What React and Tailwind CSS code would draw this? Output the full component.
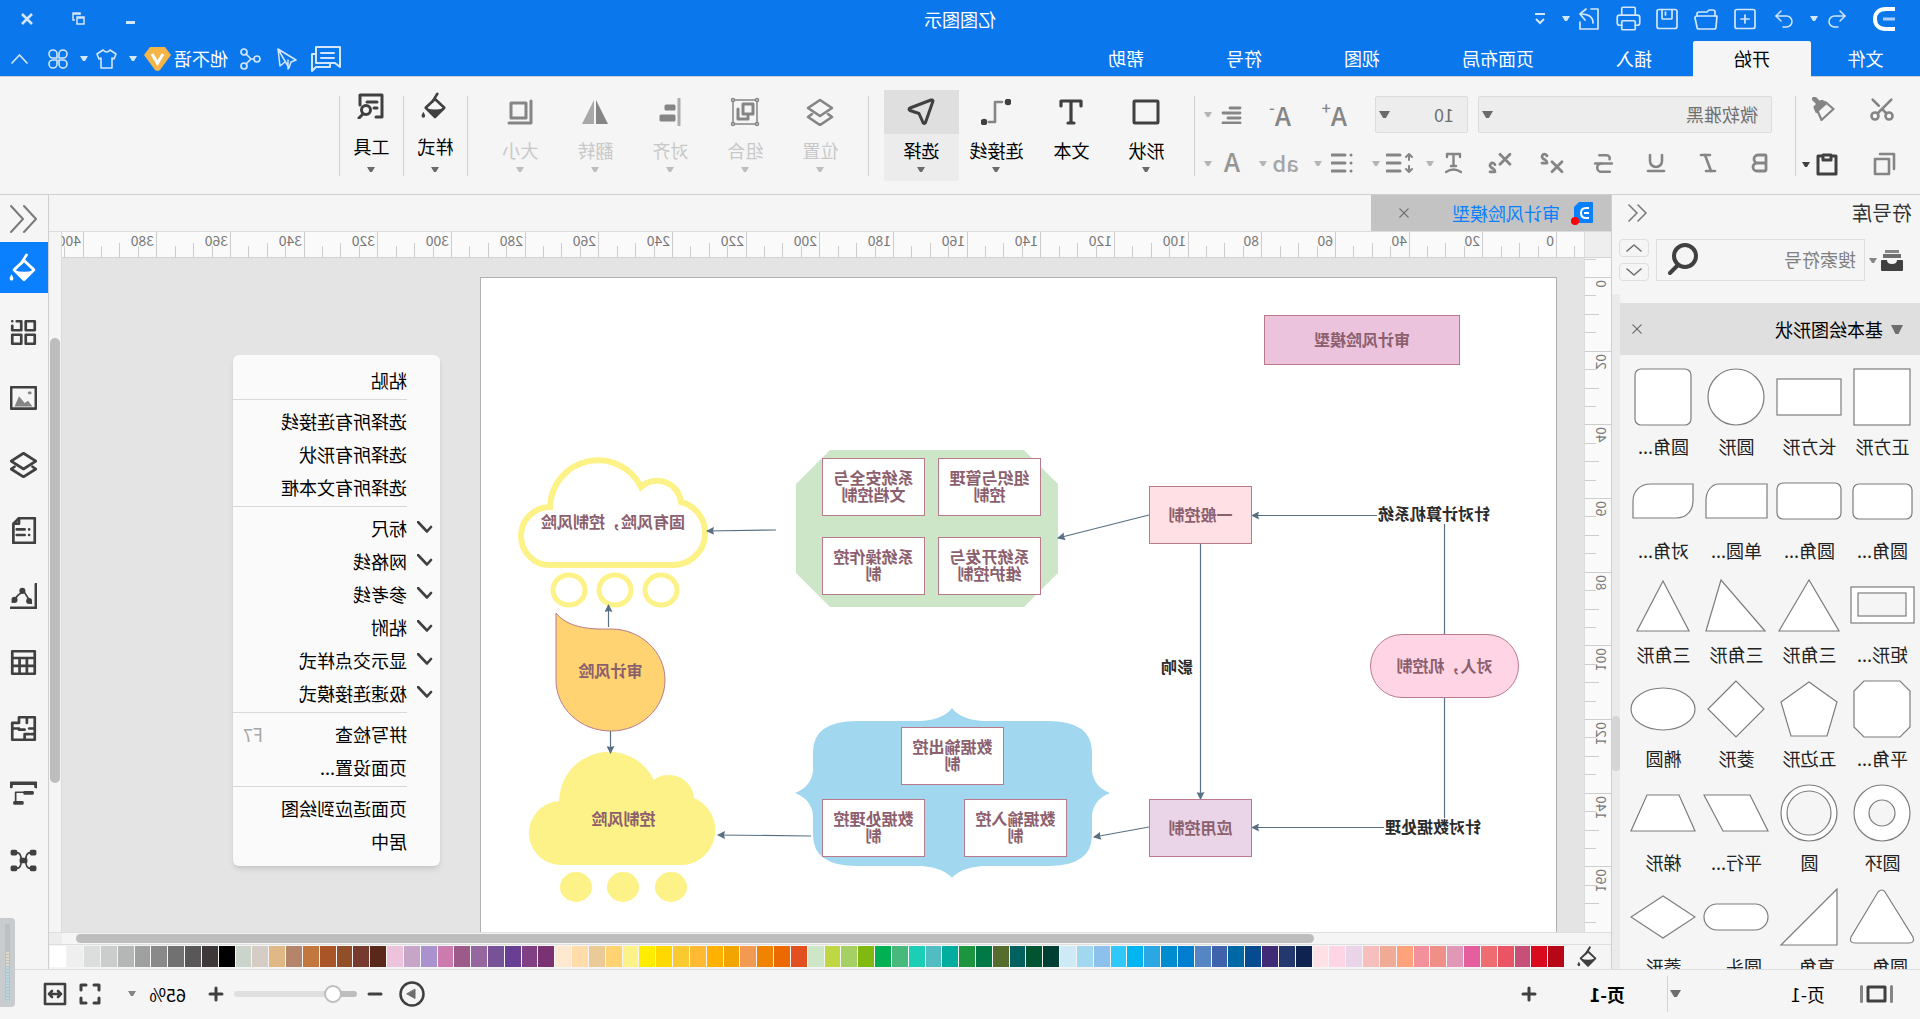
import { useState } from "react";
import {
  Bold,
  Italic,
  Printer,
  Redo2,
  Scissors,
  Strikethrough,
  Subscript,
  Superscript,
  Underline,
  Undo2,
} from "lucide-react";

const MENUS = ["文件", "开始", "插入", "页面布局", "视图", "符号", "帮助"];

const PALETTE = [
  "#b70717", "#d90a1e", "#c75079", "#ea5465", "#ed6d71", "#e55f9e", "#e198b7", "#ef8f88", "#f2919c", "#ffa17b",
  "#f0ab96", "#f6bebc", "#ead5e8", "#ffd5e5", "#ffe0e4", "#0f2350", "#23386f", "#402b77", "#064a8f", "#0068a5",
  "#3f62ad", "#5585c3", "#007fd0", "#008dd0", "#2ba7e3", "#00b5f0", "#30c8fa", "#8bc1ec", "#a1d8f0", "#cdeaf6",
  "#003f33", "#005530", "#00615f", "#566c2f", "#007947", "#1d953f", "#00ad9e", "#51bdc2", "#1cceb5", "#47b97d",
  "#00b053", "#80b910", "#a5d063", "#bfd743", "#cde6c7", "#e2501f", "#ec6800", "#f08300", "#f29a52", "#f2a500",
  "#ffb000", "#ffb933", "#f9c931", "#ffd800", "#ffec00", "#fdf287", "#ffd371", "#eacb97", "#ffdcaa", "#fde9d0",
  "#7b3272", "#814084", "#693f94", "#765296", "#96679f", "#9c5a8a", "#cb7bae", "#a992ce", "#c7a5c9", "#ecc3da",
  "#5a281a", "#763a2e", "#924d29", "#a95527", "#c1773e", "#b4856b", "#dfb885", "#d5ccc6", "#cbd4cb", "#000000",
  "#3e3838", "#595757", "#717171", "#898989", "#9fa0a0", "#b5b6b6", "#cbcdcc", "#dcdddd", "#efefef", "#ffffff",
];

const SHAPES = [
  { name: "正方形", draw: <rect x="5" y="2" width="56" height="56" /> },
  { name: "长方形", draw: <rect x="1" y="12" width="64" height="36" /> },
  { name: "圆形", draw: <circle cx="33" cy="30" r="28" /> },
  { name: "圆角...", draw: <rect x="5" y="2" width="56" height="56" rx="6" /> },
  { name: "圆角...", draw: <rect x="3" y="13" width="59" height="35" rx="6" /> },
  { name: "圆角...", draw: <rect x="1" y="12" width="64" height="36" rx="6" /> },
  { name: "单圆...", draw: <path d="M2 13h48c8 0 13 8 13 16v18H2z" /> },
  { name: "对角...", draw: <path d="M3 13h42c12 0 18 8 18 17v17H20C9 47 3 39 3 30z" /> },
  { name: "矩形...", draw: <g><rect x="1" y="12" width="63" height="36" /><rect x="9" y="18" width="48" height="23" fill="#f5f5f5" /></g> },
  { name: "三角形", draw: <path d="M33 5l30 51H3z" /> },
  { name: "三角形", draw: <path d="M48 5l15 51H4z" /> },
  { name: "三角形", draw: <path d="M33 6l26 50H7z" /> },
  { name: "平角...", draw: <path d="M15 2h36l10 10v36L51 58H15L5 48V12z" /> },
  { name: "五边形", draw: <path d="M33 3l28 20-10 34H15L5 23z" /> },
  { name: "菱形", draw: <path d="M33 2l28 28-28 28L5 30z" /> },
  { name: "椭圆", draw: <ellipse cx="33" cy="30" rx="32" ry="21" /> },
  { name: "圆环", draw: <g><circle cx="33" cy="30" r="28" /><circle cx="33" cy="30" r="13" fill="#f5f5f5" /></g> },
  { name: "圆", draw: <g><circle cx="33" cy="30" r="28" /><circle cx="33" cy="30" r="22" fill="#f5f5f5" /></g> },
  { name: "平行...", draw: <path d="M19 12h46L46 48H1z" /> },
  { name: "梯形", draw: <path d="M17 12h32l16 36H1z" /> },
  { name: "圆角...", draw: <path d="M30 5q3-4 7 0l27 45q2 6-4 6H6q-6 0-4-6z" /> },
  { name: "直角...", draw: <path d="M5 2v56h56z" /> },
  { name: "圆头...", draw: <rect x="1" y="17" width="64" height="26" rx="13" /> },
  { name: "菱形", draw: <path d="M33 9l32 21-32 21L1 30z" /> },
];

const NODES = [
  { text: "审计风险模型", box: "left-[96px] top-[37px] h-[50px] w-[196px] border bg-[#ebc3dc]" },
  { text: "一般控制", box: "left-[304px] top-[208px] h-[58px] w-[103px] border bg-[#ffe0e4]" },
  { text: "应用控制", box: "left-[304px] top-[521px] h-[58px] w-[103px] border bg-[#ead5e8]" },
  { text: "对人，机控制", box: "left-[37px] top-[356px] h-[64px] w-[149px] rounded-full border bg-[#ffd5e5]" },
  { text: "组织与管理控制", box: "left-[515px] top-[180px] h-[58px] w-[103px] border bg-white" },
  { text: "系统安全与文档控制", box: "left-[631px] top-[180px] h-[58px] w-[103px] border bg-white" },
  { text: "系统开发与维护控制", box: "left-[515px] top-[259px] h-[58px] w-[103px] border bg-white" },
  { text: "系统操作控制", box: "left-[631px] top-[259px] h-[58px] w-[103px] border bg-white" },
  { text: "数据输出控制", box: "left-[552px] top-[449px] h-[58px] w-[103px] border bg-white" },
  { text: "数据输入控制", box: "left-[489px] top-[521px] h-[58px] w-[103px] border bg-white" },
  { text: "数据处理控制", box: "left-[631px] top-[521px] h-[58px] w-[103px] border bg-white" },
  { text: "固有风险，控制风险", box: "left-[853px] top-[230px] h-[28px] w-[180px]" },
  { text: "审计风险", box: "left-[894px] top-[379px] h-[28px] w-[103px]" },
  { text: "控制风险", box: "left-[881px] top-[527px] h-[28px] w-[103px]" },
];

const EDGE_LABELS = [
  { text: "针对计算机系统", box: "left-[66px] top-[225px]" },
  { text: "针对数据处理", box: "left-[75px] top-[538px]" },
  { text: "影响", box: "left-[363px] top-[378px]" },
];

const CONTEXT_MENU = [
  [{ label: "粘贴" }],
  [{ label: "选择所有连接线" }, { label: "选择所有形状" }, { label: "选择所有文本框" }],
  [
    { label: "标尺", checked: true },
    { label: "网格线", checked: true },
    { label: "参考线", checked: true },
    { label: "粘附", checked: true },
    { label: "显示交点样式", checked: true },
    { label: "极速连接模式", checked: true },
  ],
  [{ label: "拼写检查", hotkey: "F7" }, { label: "页面设置..." }],
  [{ label: "页面适应到绘图" }, { label: "居中" }],
];

function Icon({ className = "h-6 w-6", children, width = 2, box = "0 0 24 24" }) {
  return (
    <svg
      viewBox={box}
      className={`shrink-0 ${className}`}
      fill="none"
      stroke="currentColor"
      strokeWidth={width}
      strokeLinecap="round"
      strokeLinejoin="round"
      aria-hidden="true"
    >
      {children}
    </svg>
  );
}

function Caret({ className = "h-[5px] w-2" }) {
  return (
    <svg viewBox="0 0 8 5" className={`shrink-0 ${className}`} fill="currentColor" preserveAspectRatio="none" aria-hidden="true">
      <path d="M0 0h8L5 5H3z" />
    </svg>
  );
}

function Bucket({ className }) {
  return (
    <Icon className={className} width="2.2">
      <path d="M12 6l8 7.5-8 8-8-8z" />
      <path d="M4.5 14q7.5 2 15 0L12 21.5z" fill="currentColor" stroke="none" />
      <path d="M14 8L10 1.5" />
      <path d="M22 17c1 2 1.5 2.5 1.5 3.5a1.5 1.5 0 0 1-3 0c0-1 .5-1.5 1.5-3.5z" fill="currentColor" stroke="none" />
    </Icon>
  );
}

function TitleBar() {
  const quick = "flex h-8 w-[39px] items-center justify-center";
  return (
    <div className="grid h-[41px] grid-cols-[1fr_auto_1fr] items-center pb-1 text-[#d3e6fc]">
      <div className="flex items-center pl-[25px]">
        <svg viewBox="0 0 22 24" className="h-6 w-[22px]" fill="none" stroke="white" strokeWidth="4" aria-hidden="true">
          <path d="M0 2h9c7 0 11 4 11 10s-4 10-11 10H0" />
          <path d="M0 12h12" stroke="#a9cffa" strokeWidth="3" />
        </svg>
        <button className={`ml-4 ${quick}`} aria-label="撤销"><Undo2 size={24} strokeWidth={1.5} /></button>
        <Caret />
        <button className={`ml-1.5 ${quick}`} aria-label="重做"><Redo2 size={24} strokeWidth={1.5} /></button>
        <button className={quick} aria-label="新建">
          <Icon className="h-6 w-[22px]" box="1 0 22 24" width="1.7"><rect x="2" y="2.5" width="20" height="19" rx="2" /><path d="M12 8v8M8 12h8" /></Icon>
        </button>
        <button className={quick} aria-label="打开">
          <Icon width="1.7"><path d="M3 9V5q0-2 2-2h4l2 2h8q2 0 2 2v2" /><path d="M1 9h20q2 0 2 2l-2 9q0 2-2 2H4q-2 0-2-2z" /></Icon>
        </button>
        <button className={quick} aria-label="保存">
          <Icon width="1.7"><rect x="2" y="2.5" width="20" height="19" rx="2" /><path d="M7 3v8q0 1 1 1h8q1 0 1-1V3M13.5 5v3" /></Icon>
        </button>
        <button className={quick} aria-label="打印"><Printer size={27} strokeWidth={1.5} /></button>
        <button className={quick} aria-label="导出">
          <Icon width="1.7"><path d="M10 2H3v20h18v-7M8 16c0-6 4-9 13-9M15 2l6 5-5 6" /></Icon>
        </button>
        <Caret />
        <button className="ml-4 flex h-8 w-3 items-center justify-center" aria-label="自定义快速访问">
          <svg viewBox="0 0 12 12" className="h-3 w-3" fill="none" stroke="currentColor" strokeWidth="2" aria-hidden="true">
            <path d="M1 1h10M2 6l4 4 4-4" />
          </svg>
        </button>
      </div>
      <h1 className="text-lg leading-7 text-white">亿图图示</h1>
      <div className="flex justify-end pr-px">
        <button className="flex h-8 w-[52px] items-center justify-center" aria-label="最小化">
          <span className="mt-2 h-[3px] w-[9px] bg-current" />
        </button>
        <button className="flex h-8 w-[52px] items-center justify-center" aria-label="还原">
          <svg viewBox="0 0 13 13" className="h-[13px] w-[13px]" fill="none" stroke="currentColor" strokeWidth="1.5" aria-hidden="true">
            <path d="M1 5h7v7H1zM1 6h7M5 3V1h7v7h-2M5 2h7" />
          </svg>
        </button>
        <button className="flex h-8 w-[52px] items-center justify-center" aria-label="关闭">
          <svg viewBox="0 0 12 12" className="h-3 w-3" fill="none" stroke="currentColor" strokeWidth="2.5" aria-hidden="true">
            <path d="M1 1l10 10M11 1L1 11" />
          </svg>
        </button>
      </div>
    </div>
  );
}

function MenuBar({ active, onSelect }) {
  return (
    <div className="flex h-[35px] justify-between text-white">
      <nav className="flex">
        {MENUS.map((menu) => (
          <button
            key={menu}
            onClick={() => onSelect(menu)}
            className={`pb-0.5 text-lg leading-7 ${menu === "文件" ? "w-[109px]" : "px-[41px]"} ${
              menu === active ? "relative z-10 -mb-px rounded-t-xs bg-[#f5f5f5] text-black" : ""
            }`}
          >
            {menu}
          </button>
        ))}
      </nav>
      <div className="flex items-center pr-[11px] text-[#d3e6fc]">
        <button aria-label="评论">
          <Icon className="h-[26px] w-[30px]" box="0 0 30 26" width="2">
            <path d="M1 1h24v16H6l-5 4zM7 7h13M7 12h13" />
            <path d="M26 8h3v17l-4-4H11v-4" />
          </Icon>
        </button>
        <button className="ml-3.5" aria-label="发送">
          <Icon className="h-[22px] w-5" box="0 0 20 22" width="1.5"><path d="M19 1L1 12l5 2 2 6zM19 1l-2 17-5-4M9 21V12z" /></Icon>
        </button>
        <button className="ml-4" aria-label="分享">
          <Icon className="h-[22px] w-[21px]" box="0 0 21 22" width="1.7">
            <circle cx="4" cy="11" r="3" /><circle cx="17" cy="4" r="3" /><circle cx="17" cy="18" r="3" />
            <path d="M7 11h3l5-5M10 11l5 5" />
          </Icon>
        </button>
        <button className="ml-3 pb-0.5 text-lg leading-7 text-white">他不语</button>
        <svg viewBox="0 0 27 24" className="ml-[3px] h-6 w-[27px]" aria-hidden="true">
          <path d="M6 0h15l6 8-11 15q-2.5 2-5 0L0 8z" fill="#f3b548" />
          <path d="M8 7l5.5 9L19 7" fill="none" stroke="white" strokeWidth="3" />
        </svg>
        <Caret className="ml-[7px] h-[5px] w-2" />
        <button className="ml-3" aria-label="皮肤">
          <Icon className="h-5 w-[21px]" box="0 0 21 20" width="1.6"><path d="M7 1q3 4 7 0l6 4-2 5-2-1v10H5V9l-2 1-2-5z" /></Icon>
        </button>
        <Caret className="ml-2 h-[5px] w-2" />
        <button className="ml-3" aria-label="应用">
          <Icon className="h-5 w-5" box="0 0 20 20" width="1.6">
            <path d="M9 9H5a4 4 0 1 1 4-4zM11 9h4a4 4 0 1 0-4-4zM9 11H5a4 4 0 1 0 4 4zM11 11h4a4 4 0 1 1-4 4z" />
          </Icon>
        </button>
        <button className="ml-5" aria-label="收起功能区">
          <Icon className="h-2.5 w-[17px]" box="0 0 17 10" width="1.7"><path d="M1 9l7.5-8L16 9" /></Icon>
        </button>
      </div>
    </div>
  );
}

function Divider() {
  return <div className="mt-[19px] h-20 w-px shrink-0 bg-[#cfcfcf]" />;
}

function ToolButton({ label, icon, caret = true, selected, disabled, tight }) {
  return (
    <button
      disabled={disabled}
      className={`mt-[13px] flex h-[91px] shrink-0 flex-col items-center rounded-xs ${tight ? "w-[63px]" : "w-[75px]"} ${
        selected ? "bg-[#ececec]" : ""
      }`}
    >
      <span
        className={`flex w-full shrink-0 items-center justify-center ${tight ? "mb-[11px] h-8" : "mb-[3px] h-11"} ${
          selected ? "bg-[#dfdfdf]" : ""
        } ${disabled ? "text-[#858585]" : "text-[#404040]"}`}
      >
        {icon}
      </span>
      <span className={`text-lg leading-[26px] ${disabled ? "text-[#c8c8c8]" : "text-black"}`}>{label}</span>
      {caret && (
        <span className={`${tight ? "mt-2" : "mt-1"} ${disabled ? "text-[#bdbdbd]" : "text-[#6b6b6b]"}`}>
          <Caret className="block h-[5px] w-2" />
        </span>
      )}
    </button>
  );
}

function SelectBox({ label, value, className }) {
  return (
    <div className={`relative flex h-[37px] ${className}`}>
      <select
        aria-label={label}
        defaultValue={value}
        className="w-full appearance-none rounded-xs border border-[#dcdcdc] bg-[#ededed] pb-0.5 pl-[13px] text-lg leading-8 text-[#707070]"
      >
        <option>{value}</option>
      </select>
      <span className="pointer-events-none absolute right-1 top-[15px] text-[#6b6b6b]">
        <Caret className="block h-[7px] w-[11px]" />
      </span>
    </div>
  );
}

function Ribbon() {
  const fmt = "flex w-[52px] items-center justify-center";
  return (
    <div className="flex h-[119px] shrink-0 overflow-hidden border-y border-[#cfcfcf] bg-[#f5f5f5] text-[#858585]">
      <div className="flex w-[124px] shrink-0 flex-col gap-[31px] pl-6 pt-5">
        <div className="flex h-6 items-center gap-[32px]">
          <button aria-label="剪切"><Scissors size={28} strokeWidth={2.2} className="-rotate-90" /></button>
          <button aria-label="格式刷">
            <Icon className="h-6 w-[25px]" width="2.2">
              <path d="M9 6l-7 6 12 11 6-14-6-5z" />
              <path d="M9 6l5-2 7 6-2 5z" fill="currentColor" />
              <path d="M17 6l4-4" strokeWidth="5" />
            </Icon>
          </button>
        </div>
        <div className="flex h-6 items-center gap-[34px]">
          <button aria-label="复制">
            <Icon width="2.6"><path d="M7 7h14v15H7zM2 17V2h14" /></Icon>
          </button>
          <div className="flex items-center gap-1.5 text-[#404040]">
            <button aria-label="粘贴">
              <Icon className="h-6 w-[22px]" box="0 0 22 24" width="3"><path d="M6 4H2v18h18V4h-4M7 3h8v5H7z" /></Icon>
            </button>
            <Caret />
          </div>
        </div>
      </div>
      <Divider />
      <div className="flex w-[600px] shrink-0 flex-col gap-3 pl-[23px] pt-[19px]">
        <div className="flex items-center">
          <SelectBox label="字体" value="微软雅黑" className="w-[294px]" />
          <SelectBox label="字号" value="10" className="ml-2.5 w-[93px]" />
          <button className="ml-7 flex w-6 text-[26px] font-medium leading-9" aria-label="增大字号">
            A<span className="text-base leading-5">+</span>
          </button>
          <button className="ml-8 flex w-6 text-[26px] font-medium leading-9" aria-label="减小字号">
            A<span className="text-base leading-5">-</span>
          </button>
          <button className="ml-[25px]" aria-label="对齐方式">
            <Icon className="h-[18px] w-[21px]" box="0 0 21 18" width="2.8"><path d="M2 2h10M2 7h17M2 12h12M2 17h17" /></Icon>
          </button>
          <Caret className="ml-[9px] h-[5px] w-2 text-[#b5b5b5]" />
        </div>
        <div className="-ml-3.5 flex h-9 items-center">
          <button className={fmt} aria-label="粗体"><Bold size={24} strokeWidth={2.8} /></button>
          <button className={fmt} aria-label="斜体"><Italic size={24} strokeWidth={2.6} /></button>
          <button className={fmt} aria-label="下划线"><Underline size={24} strokeWidth={2.6} /></button>
          <button className={fmt} aria-label="删除线"><Strikethrough size={25} strokeWidth={2.4} /></button>
          <button className={fmt} aria-label="上标"><Superscript size={30} strokeWidth={2.2} /></button>
          <button className={fmt} aria-label="下标"><Subscript size={30} strokeWidth={2.2} /></button>
          <button className="ml-3" aria-label="文字路径">
            <Icon className="h-[22px] w-[17px]" box="0 0 17 22" width="2.4"><path d="M2 5V2h13v3M8.5 2v12M6 14h5M1 20q7.5-5 15 0" /></Icon>
          </button>
          <Caret className="ml-[11px] h-[5px] w-2 text-[#b5b5b5]" />
          <button className="ml-[13px]" aria-label="行距">
            <Icon className="h-[22px] w-[27px]" box="0 0 27 22" width="2"><path d="M4 3v5M4 14v5M1 5l3-3 3 3M1 17l3 3 3-3" /><path d="M13 3h13M13 11h13M13 19h13" strokeWidth="3" /></Icon>
          </button>
          <Caret className="ml-1.5 h-[5px] w-2 text-[#b5b5b5]" />
          <button className="ml-[19px]" aria-label="项目符号">
            <Icon className="h-[22px] w-[22px]" box="0 0 22 22" width="3"><path d="M2 3h0M2 11h0M2 19h0M8 3h13M8 11h13M8 19h13" /></Icon>
          </button>
          <Caret className="ml-[9px] h-[5px] w-2 text-[#b5b5b5]" />
          <button className="ml-[15px] w-[26px] pb-0.5 text-[22px] font-medium leading-8 text-[#a5a5a5]" aria-label="文字突出">ab</button>
          <Caret className="ml-1.5 h-[5px] w-2 text-[#b5b5b5]" />
          <button className="ml-4 w-[22px] pb-1 text-[26px] font-medium leading-9 text-[#959595]" aria-label="字体颜色">A</button>
          <Caret className="ml-[9px] h-[5px] w-2 text-[#b5b5b5]" />
        </div>
      </div>
      <Divider />
      <div className="flex pl-2.5 pr-[15px]">
        <ToolButton label="形状" icon={<Icon className="h-[26px] w-7" box="0 0 28 26" width="3"><rect x="2" y="2" width="24" height="22" rx="1" /></Icon>} />
        <ToolButton
          label="文本"
          caret={false}
          icon={<Icon className="h-[26px] w-6" box="0 0 24 26" width="3.2"><path d="M2 7V2h20v5M12 2v22M9 24h6" /></Icon>}
        />
        <ToolButton
          label="连接线"
          icon={
            <Icon className="h-[26px] w-[30px]" box="0 0 30 26" width="2.6">
              <path d="M9 3h7v20h6" stroke="#858585" /><circle cx="3" cy="3" r="2" fill="currentColor" /><circle cx="27" cy="23" r="2" fill="currentColor" />
            </Icon>
          }
        />
        <ToolButton
          label="选择"
          selected
          icon={<Icon className="h-7 w-7" box="0 0 28 28" width="3"><path d="M2 3q0-1.5 2-1l21 8q2 1 0 2.5l-9 3-4 9q-1.5 2-2.5 0z" /></Icon>}
        />
      </div>
      <Divider />
      <div className="flex pl-2.5 pr-[15px]">
        <ToolButton disabled label="位置" icon={<Icon className="h-7 w-7" box="0 0 28 28" width="2.6"><path d="M14 2l12 8-12 8L2 10z" /><path d="M6 16l-4 3 12 8 12-8-4-3" /></Icon>} />
        <ToolButton
          disabled
          label="组合"
          icon={
            <Icon className="h-[30px] w-[30px]" box="0 0 30 30" width="1.5">
              <rect x="3" y="3" width="24" height="24" />
              <path d="M7 7h10v10H7zM22 12v10H12v-3" strokeWidth="3" />
              <circle cx="3" cy="3" r="1.5" fill="#f5f5f5" /><circle cx="27" cy="3" r="1.5" fill="#f5f5f5" />
              <circle cx="3" cy="27" r="1.5" fill="#f5f5f5" /><circle cx="27" cy="27" r="1.5" fill="#f5f5f5" />
            </Icon>
          }
        />
        <ToolButton
          disabled
          label="对齐"
          icon={<Icon className="h-7 w-[22px]" box="0 0 22 28" width="3"><path d="M2 1v26" stroke="#adadad" /><path d="M7 8h8v3H7zM7 18h13v4H7z" fill="currentColor" /></Icon>}
        />
        <ToolButton
          disabled
          label="翻转"
          icon={<svg viewBox="0 0 28 26" className="h-[26px] w-7" aria-hidden="true"><path d="M13 1v24H1z" fill="#858585" /><path d="M15 1v24h12z" fill="#a8a8a8" /></svg>}
        />
        <ToolButton disabled label="大小" icon={<Icon className="h-[26px] w-[26px]" box="0 0 26 26" width="3"><path d="M7 4h15v15H7zM2 2v22h22" /></Icon>} />
      </div>
      <Divider />
      <ToolButton tight label="样式" icon={<Bucket className="h-7 w-7" />} />
      <Divider />
      <ToolButton
        tight
        label="工具"
        icon={
          <Icon className="h-[26px] w-7" box="0 0 28 26" width="3">
            <path d="M9 24H3V2h22v10M8 9h10" /><path d="M8 15h3" /><circle cx="19" cy="17" r="4.5" /><path d="M22 21l4 4" />
          </Icon>
        }
      />
      <Divider />
    </div>
  );
}

function Cross({ className = "h-3 w-3" }) {
  return <Icon className={className} box="0 0 12 12" width="1.5"><path d="M1 1l10 10M11 1L1 11" /></Icon>;
}

function ShapeLibrary() {
  return (
    <aside className="flex w-[309px] shrink-0 flex-col border-r border-[#cfcfcf]">
      <div className="flex h-11 shrink-0 items-center justify-between pb-2 pl-2 pr-4">
        <h2 className="text-xl leading-8 text-[#333]">符号库</h2>
        <button className="text-[#7a7a7a]" aria-label="折叠符号库">
          <Icon className="h-[18px] w-[19px]" box="0 0 19 18" width="1.6"><path d="M9 1L1 9l8 8M18 1l-8 8 8 8" /></Icon>
        </button>
      </div>
      <div className="flex h-[42px] shrink-0 items-center pl-[17px]">
        <button className="flex items-center gap-1 text-[#404040]" aria-label="符号库列表">
          <svg viewBox="0 0 22 22" className="h-[22px] w-[22px]" aria-hidden="true">
            <path d="M4 1h14v3H4z" fill="#858585" /><path d="M2 5h18v4H2z" fill="#6e6e6e" />
            <path d="M1 11h5q0 4 5 4t5-4h5q1 0 1 1v9q0 1-1 1H1q-1 0-1-1v-9q0-1 1-1z" fill="currentColor" />
          </svg>
          <Caret className="h-[5px] w-2 text-[#858585]" />
        </button>
        <div className="ml-1 flex h-[42px] w-[209px] items-center border border-[#dedede] pb-0.5 pl-2 pr-[11px]">
          <input
            type="search"
            aria-label="搜索符号"
            placeholder="搜索符号"
            className="h-9 w-0 flex-1 bg-transparent text-lg leading-8 outline-none placeholder:text-[#808080]"
          />
          <Icon className="h-8 w-[30px] text-[#404040]" box="0 0 30 32" width="4"><circle cx="13" cy="13" r="11" /><path d="M20 22l8 8" /></Icon>
        </div>
        <div className="ml-[7px] flex h-full w-[30px] flex-col justify-between text-[#6e6e6e]">
          <button className="flex h-[18px] items-center justify-center rounded-sm border border-[#dedede]" aria-label="上一个">
            <Icon className="h-2 w-4" box="0 0 16 8" width="1.6"><path d="M1 7l7-6 7 6" /></Icon>
          </button>
          <button className="flex h-[18px] items-center justify-center rounded-sm border border-[#dedede]" aria-label="下一个">
            <Icon className="h-2 w-4" box="0 0 16 8" width="1.6"><path d="M1 1l7 6 7-6" /></Icon>
          </button>
        </div>
      </div>
      <div className="mt-[13px] flex min-h-0 flex-1">
        <div className="flex min-w-0 flex-1 flex-col overflow-hidden pt-[9px]">
          <div className="flex h-[52px] shrink-0 items-center bg-[#dfdfdf] pl-[17px] pr-3">
            <Caret className="h-[9px] w-3 text-[#6e6e6e]" />
            <h3 className="ml-2 flex-1 pb-px text-lg leading-7 text-black">基本绘图形状</h3>
            <button className="text-[#6e6e6e]" aria-label="关闭基本绘图形状"><Cross className="h-2.5 w-2.5" /></button>
          </div>
          <ul className="grid grid-cols-4 gap-y-3 pl-px pr-[7px] pt-3">
            {SHAPES.map((shape, index) => (
              <li key={index} className="flex flex-col items-center gap-1.5">
                <svg viewBox="0 0 66 60" className="h-[60px] w-[66px]" fill="white" stroke="#7d7d7d" strokeWidth="1.2" aria-hidden="true">
                  {shape.draw}
                </svg>
                <span className="whitespace-nowrap text-lg leading-[26px] text-[#222]">{shape.name}</span>
              </li>
            ))}
          </ul>
        </div>
        <div className="w-2 bg-[#ebebeb] pt-[422px]">
          <div className="h-[55px] rounded bg-[#d5d5d5]" />
        </div>
      </div>
    </aside>
  );
}

// one tick every 5 units, a label every 20; 20 units are about 73.67px at 65%
function ticks(origin, count) {
  return Array.from({ length: count }, (_, i) => {
    const step = i - 1;
    return { step, at: Math.round(origin + (step * 73.67) / 4), value: step * 5 };
  });
}

function HorizontalRuler() {
  return (
    <svg className="h-[25px] w-full text-sm" aria-hidden="true">
      {ticks(28, 84).map(({ step, at, value }) => (
        <g key={step}>
          <path d={`M${at} ${step % 4 === 0 ? 0 : step % 2 === 0 ? 11 : 14}V25`} transform="translate(-.5 0)" stroke="#cdcdcd" />
          {step % 4 === 0 && <text x={at + 2} y="14" fill="#777">{value}</text>}
        </g>
      ))}
    </svg>
  );
}

function VerticalRuler() {
  return (
    <svg className="h-full w-[26px] text-sm" aria-hidden="true">
      {ticks(19, 37).map(({ step, at, value }) => (
        <g key={step}>
          <path d={`M26 ${at}H${step % 4 === 0 ? 0 : step % 2 === 0 ? 12 : 15}`} transform="translate(0 .5)" stroke="#cdcdcd" />
          {step % 4 === 0 && (
            <text textAnchor="end" transform={`translate(15 ${at + 3}) rotate(-90)`} fill="#777">{value}</text>
          )}
        </g>
      ))}
    </svg>
  );
}

function Drawing() {
  return (
    <svg className="absolute left-0 top-0 h-full w-full" aria-hidden="true">
      <defs>
        <marker id="head" viewBox="0 0 8 8" refX="7" refY="4" markerWidth="8" markerHeight="8" markerUnits="userSpaceOnUse" orient="auto">
          <path d="M0 0l8 4-8 4 1-4z" fill="#587081" />
        </marker>
      </defs>
      <g transform="translate(-364 -278)">
        <path d="M896 450h194l34 34v89l-34 34H896l-34-34v-89z" fill="#cde6c7" />
        <path
          d="M872 721h66q22-2 30-13 8 11 30 13h65q44 0 44 31v19q2 16 18 22-16 6-18 22v20q0 31-44 31h-65q-22 2-30 12-8-10-30-12h-66q-44 0-44-31v-20q-2-16-18-22 16-6 18-22v-19q0-31 44-31z"
          fill="#a1d8f0"
        />
        <g fill="none" stroke="#fdf287" strokeWidth="6">
          <path d="M1370 565A29 29 0 0 0 1370 507A48 48 0 0 0 1279 487A24 24 0 0 0 1239 502A32 32 0 0 0 1246 565Z" />
          <g strokeWidth="5">
            <ellipse cx="1351" cy="590" rx="16" ry="15" />
            <ellipse cx="1305" cy="590" rx="16" ry="15" />
            <ellipse cx="1259" cy="590" rx="16" ry="15" />
          </g>
        </g>
        <g fill="#fdf287">
          <path d="M1357 865A32 32 0 0 0 1361 801A50 50 0 0 0 1266 780A25 25 0 0 0 1226 798A35 35 0 0 0 1236 865Z" />
          <ellipse cx="1344" cy="887" rx="16" ry="15" />
          <ellipse cx="1297" cy="887" rx="16" ry="15" />
          <ellipse cx="1249" cy="887" rx="16" ry="15" />
        </g>
        <path
          d="M1364 613v67c0 28-24 51-55 51-30 0-54-23-54-51s24-51 54-51c31 1 46-5 55-16z"
          fill="#ffd371"
          stroke="#b97a8c"
        />
        <g fill="none" stroke="#587081" strokeWidth="1.2">
          <path d="M475.5 524v110M475.5 698v120" />
          <path d="M543 515.5h125" markerEnd="url(#head)" />
          <path d="M536 827.5h132" markerEnd="url(#head)" />
          <path d="M719.5 544v255" markerEnd="url(#head)" />
          <path d="M771 515l91 23" markerEnd="url(#head)" />
          <path d="M771 827l55 10" markerEnd="url(#head)" />
          <path d="M1144 530l69 1" markerEnd="url(#head)" />
          <path d="M1109 836l93-1" markerEnd="url(#head)" />
          <path d="M1311.5 627v-22" markerEnd="url(#head)" />
          <path d="M1309.5 731v22" markerEnd="url(#head)" />
        </g>
      </g>
    </svg>
  );
}

function ContextMenu() {
  return (
    <div role="menu" className="absolute right-[171px] top-[97px] w-[207px] rounded-md bg-[#fafafa] pb-[7px] pt-2.5 text-lg text-black shadow-md">
      {CONTEXT_MENU.map((group, index) => (
        <div key={index}>
          {index > 0 && <div className="mb-1.5 ml-[33px] mt-px h-px bg-[#d9d9d9]" />}
          {group.map((item) => (
            <button
              key={item.label}
              role={item.checked ? "menuitemcheckbox" : "menuitem"}
              aria-checked={item.checked}
              className="flex h-[33px] w-full items-center pb-1 pr-2.5 text-left leading-7"
            >
              <span className="w-[33px] pl-[7px] text-[#404040]">
                {item.checked && <Icon className="mb-0.5 h-3 w-4" box="0 0 16 12" width="2.6"><path d="M2 6l4 4.5L15 1" /></Icon>}
              </span>
              <span className="flex-1">{item.label}</span>
              {item.hotkey && <span className="text-[#a8a8a8]">{item.hotkey}</span>}
            </button>
          ))}
        </div>
      ))}
    </div>
  );
}

function Workspace() {
  return (
    <main className="flex min-w-0 flex-1 flex-col">
      <div className="flex h-[37px] shrink-0 border-b border-[#dcdcdc]">
        <div className="flex w-60 items-center bg-[#c3c3c3] pl-[18px] pr-[28px]">
          <svg viewBox="0 0 22 23" className="h-[23px] w-[22px]" aria-hidden="true">
            <path d="M0 1q0-1 1-1h13l5 5v16H1q-1 0-1-1z" fill="#0a80ff" />
            <path d="M4 6h3q5 0 5 5t-5 5H4M4 11h5" fill="none" stroke="white" strokeWidth="2" />
            <circle cx="18" cy="19" r="4" fill="red" />
          </svg>
          <a href="#audit" className="ml-[11px] flex-1 text-lg leading-7 text-[#0a80ff]">审计风险模型</a>
          <button className="text-[#6e6e6e]" aria-label="关闭文档"><Cross className="h-2.5 w-2.5" /></button>
        </div>
      </div>
      <div className="flex min-h-0 flex-1">
        <div className="flex min-w-0 flex-1 flex-col">
          <div className="flex h-[26px] shrink-0 border-b border-[#d3d3d3] bg-[#fafafa]">
            <div className="w-[27px] shrink-0 border-r border-[#dcdcdc] bg-[#eee]" />
            <div className="min-w-0 flex-1 overflow-hidden"><HorizontalRuler /></div>
          </div>
          <div className="flex min-h-0 flex-1">
            <div className="w-[27px] shrink-0 overflow-hidden border-r border-[#dcdcdc] bg-[#fafafa]"><VerticalRuler /></div>
            <div className="relative min-w-0 flex-1 overflow-hidden bg-[#e4e4e4]">
              <div className="absolute bottom-0 left-[27px] top-[19px] w-[1077px] overflow-hidden border border-b-0 border-[#b0b0b0] bg-white">
                <Drawing />
                {NODES.map((node) => (
                  <div
                    key={node.text}
                    className={`absolute flex items-center justify-center border-[#b97a8c] px-2 pb-0.5 text-center text-base font-bold leading-[17px] text-[#8c5f6e] ${node.box}`}
                  >
                    {node.text}
                  </div>
                ))}
                {EDGE_LABELS.map((label) => (
                  <div key={label.text} className={`absolute whitespace-nowrap text-base font-bold leading-5 text-[#2b2b2b] ${label.box}`}>
                    {label.text}
                  </div>
                ))}
              </div>
              <ContextMenu />
            </div>
          </div>
        </div>
        <div className="flex w-[13px] shrink-0 justify-center border-l border-[#dcdcdc] pt-[106px]">
          <div className="h-[445px] w-2.5 rounded-full bg-[#bdbdbd]" />
        </div>
      </div>
      <div className="flex h-[13px] shrink-0 border-y border-[#dedede]">
        <div className="flex-1 pl-[297px] pr-3.5 pt-px">
          <div className="h-[9px] rounded-full bg-[#bdbdbd]" />
        </div>
        <div className="w-[13px] bg-[#ededed]" />
      </div>
      <div className="flex h-6 shrink-0 items-start pl-3 pr-px pt-px">
        <span className="w-[35px] text-[#404040]"><Bucket className="h-[22px] w-[22px]" /></span>
        <div className="flex flex-1 gap-px">
          {PALETTE.map((color) => (
            <button key={color} aria-label={color} className="h-[21px] flex-1" style={{ backgroundColor: color }} />
          ))}
        </div>
      </div>
    </main>
  );
}

function SideTools() {
  const tools = [
    ["主题", <g><path d="M2 2h8v8H2zM2 14h8v8H2zM14 14h8v8h-8z" /><path d="M18 2h-4v8h8V6M22 2h0" /></g>],
    ["图片", <g><path d="M1 2h22v19H1z" /><path d="M4 19l4-5 3 2 5-6 4 9z" fill="#858585" stroke="none" /><path d="M6 7h1" stroke="#858585" /></g>],
    ["图层", <g><path d="M12 2l11 7-11 7L1 9z" /><path d="M4 14l-3 2 11 7 11-7-3-2" /></g>],
    ["属性", <g><path d="M2 1h14l5 5v17H2zM16 1v5h5" /><path d="M7 11h0M11 11h7M7 16h0M11 16h7" /></g>],
    ["图表", <g><path d="M1 1v21h22" /><path d="M5 18l7-11 5 4 5 6" strokeWidth="1.5" /><circle cx="13" cy="7" r="1.5" fill="currentColor" /><circle cx="7" cy="16" r="1.5" fill="currentColor" /><circle cx="20" cy="15" r="1.5" fill="currentColor" /></g>],
    ["表格", <path d="M2 2h20v20H2zM2 8h20M2 15h20M9 8v14M15.5 8v14" />],
    ["平面图", <path d="M2 2h14v5h6v15H2zM9 2v5M2 12h5M16 12h6M11 13h5M11 22v-5H7M2 17h3" />],
    ["甘特图", <g><path d="M1 5V2h22v3" strokeWidth="3" /><path d="M4 10h7v1H4zM13 19h7v1h-7z" fill="currentColor" /><path d="M12 10h7v9" strokeWidth="1.5" /></g>],
    ["思维导图", <g><path d="M2 4h3v2H2zM19 4h3v2h-3zM2 18h3v2H2zM19 18h3v2h-3zM10 11h4v2h-4z" fill="currentColor" strokeWidth="3" /><path d="M6 5q4 0 4 7t-4 7M18 5q-4 0-4 7t4 7" strokeWidth="1.5" /></g>],
  ];
  return (
    <aside className="flex w-[49px] shrink-0 flex-col border-l border-[#cfcfcf] text-[#404040]">
      <button className="flex h-[47px] shrink-0 items-center justify-center text-[#7a7a7a]" aria-label="折叠面板">
        <Icon className="h-7 w-[27px]" box="0 0 27 28" width="2"><path d="M13 1L1 14l12 13M26 1L14 14l12 13" /></Icon>
      </button>
      <button className="mb-1.5 flex h-[51px] shrink-0 items-center justify-center bg-[#0a80ff] text-white" aria-label="填充">
        <Bucket className="h-[30px] w-[30px]" />
      </button>
      {tools.map(([name, drawing]) => (
        <button key={name} aria-label={name} className="flex h-[66px] shrink-0 items-center justify-center">
          <Icon className="h-[27px] w-[27px]" width="2.4">{drawing}</Icon>
        </button>
      ))}
    </aside>
  );
}

function StatusBar() {
  return (
    <footer className="flex h-[50px] shrink-0 items-center justify-between border-t border-[#dcdcdc] pb-0.5 text-lg leading-7 text-black">
      <div className="flex items-center">
        <button className="ml-[27px] text-[#404040]" aria-label="页面缩略图">
          <Icon className="h-[18px] w-[33px]" box="0 0 33 18" width="3"><path d="M8 2h17v14H8z" /><path d="M1.5 1.5v15M31.5 1.5v15" stroke="#858585" /></Icon>
        </button>
        <button className="ml-[35px] flex w-[155px] items-center justify-between">
          页-1
          <Caret className="h-[7px] w-[11px] text-[#6e6e6e]" />
        </button>
        <div className="ml-0.5 h-9 w-px bg-[#d3d3d3]" />
        <button className="ml-[42px] font-bold">页-1</button>
        <button className="ml-[53px] text-[#404040]" aria-label="添加页面">
          <Icon className="h-4 w-4" box="0 0 16 16" width="3"><path d="M8 2v12M2 8h12" /></Icon>
        </button>
      </div>
      <div className="flex items-center pr-[43px] text-[#404040]">
        <button aria-label="播放">
          <Icon className="h-[26px] w-[26px]" box="0 0 26 26" width="2.5"><circle cx="13" cy="13" r="11.5" /><path d="M10 8.5v9l8-4.5z" fill="#6e6e6e" stroke="#6e6e6e" strokeWidth="1" /></Icon>
        </button>
        <button className="ml-4" aria-label="缩小"><Icon className="h-4 w-4" box="0 0 16 16" width="3"><path d="M2 8h12" /></Icon></button>
        <input
          type="range"
          min="0"
          max="100"
          defaultValue="14"
          aria-label="缩放"
          className="ml-2.5 h-1.5 w-[123px] appearance-none rounded-full bg-linear-to-r from-[#bdbdbd] from-20% to-[#dfdfdf] to-20% [&::-webkit-slider-thumb]:h-[18px] [&::-webkit-slider-thumb]:w-[18px] [&::-webkit-slider-thumb]:appearance-none [&::-webkit-slider-thumb]:rounded-full [&::-webkit-slider-thumb]:border-2 [&::-webkit-slider-thumb]:border-[#bdbdbd] [&::-webkit-slider-thumb]:bg-white"
        />
        <button className="ml-2.5" aria-label="放大"><Icon className="h-4 w-4" box="0 0 16 16" width="3"><path d="M8 2v12M2 8h12" /></Icon></button>
        <button className="ml-[22px] flex w-[58px] items-center justify-between text-black">
          65%
          <Caret className="h-[5px] w-2 text-[#858585]" />
        </button>
        <button className="ml-[27px]" aria-label="全屏">
          <Icon className="h-[22px] w-[22px]" box="0 0 22 22" width="3"><path d="M2 7V2h5M15 2h5v5M20 15v5h-5M7 20H2v-5" /></Icon>
        </button>
        <button className="ml-3" aria-label="适应宽度">
          <Icon className="h-6 w-6" box="0 0 24 24" width="2.6"><path d="M2 2h20v20H2zM6 12h12M9 9l-3 3 3 3M15 9l3 3-3 3" /></Icon>
        </button>
      </div>
    </footer>
  );
}

function LevelMeter() {
  return (
    <div className="absolute bottom-3 right-0 h-[89px] w-[15px] rounded-l bg-[#c8ccce] p-1.5 pl-[5px]">
      <svg viewBox="0 0 5 77" className="h-[77px] w-[5px]" aria-hidden="true">
        <rect width="5" height="77" fill="#bcc0c3" />
        {Array.from({ length: 17 }, (_, i) => (
          <rect key={i} x="1" y={28 + i * 3} width="3" height="2" fill={i < 5 ? "#dcdcc4" : "#b3d9e3"} />
        ))}
      </svg>
    </div>
  );
}

export default function App() {
  const [tab, setTab] = useState("开始");

  return (
    <div className="relative flex h-screen -scale-x-100 flex-col overflow-hidden bg-[#f5f5f5] font-['Noto_Sans_CJK_SC',sans-serif]">
      <header className="shrink-0 bg-[#0a77ed]">
        <TitleBar />
        <MenuBar active={tab} onSelect={setTab} />
      </header>
      <Ribbon />
      <div className="flex min-h-0 flex-1">
        <ShapeLibrary />
        <Workspace />
        <SideTools />
      </div>
      <StatusBar />
      <LevelMeter />
    </div>
  );
}
